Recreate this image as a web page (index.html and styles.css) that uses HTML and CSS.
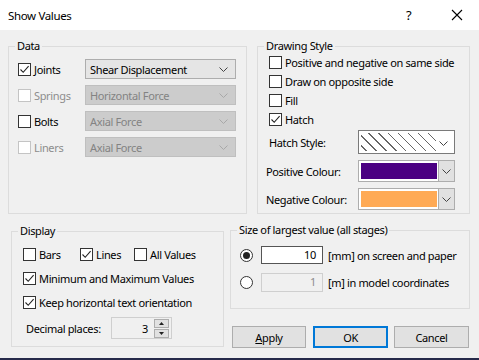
FILE: index.html
```html
<!DOCTYPE html>
<html>
<head>
<meta charset="utf-8">
<link rel="stylesheet" href="styles.css">
</head>
<body>
<div class="window">
  <div class="titlebar">
    <span class="title">Show Values</span>
    <span class="help">?</span>
    <span class="close"><svg width="12" height="12" viewBox="0 0 12 12"><path d="M1 1 L11 11 M11 1 L1 11" stroke="#000" stroke-width="1.1" fill="none"/></svg></span>
  </div>
  <div class="content">
    <div class="toprow">
      <div class="group data">
        <span class="legend">Data</span>
        <div class="drow">
          <span class="chk"><span class="box"><svg width="11" height="11" viewBox="0 0 11 11"><path d="M1.5 5.5 L4.2 8.3 L9.6 2.2" stroke="#222" stroke-width="1.1" fill="none"/></svg></span>Joints</span>
          <span class="combo">Shear Displacement<svg class="arr" width="9" height="5" viewBox="0 0 9 5"><path d="M0.5 0.5 L4.5 4.5 L8.5 0.5" stroke="#444" fill="none"/></svg></span>
        </div>
        <div class="drow">
          <span class="chk dis"><span class="box"></span>Springs</span>
          <span class="combo dis">Horizontal Force<svg class="arr" width="9" height="5" viewBox="0 0 9 5"><path d="M0.5 0.5 L4.5 4.5 L8.5 0.5" stroke="#a8a8a8" fill="none"/></svg></span>
        </div>
        <div class="drow">
          <span class="chk"><span class="box"></span>Bolts</span>
          <span class="combo dis">Axial Force<svg class="arr" width="9" height="5" viewBox="0 0 9 5"><path d="M0.5 0.5 L4.5 4.5 L8.5 0.5" stroke="#a8a8a8" fill="none"/></svg></span>
        </div>
        <div class="drow">
          <span class="chk dis"><span class="box"></span>Liners</span>
          <span class="combo dis">Axial Force<svg class="arr" width="9" height="5" viewBox="0 0 9 5"><path d="M0.5 0.5 L4.5 4.5 L8.5 0.5" stroke="#a8a8a8" fill="none"/></svg></span>
        </div>
      </div>
      <div class="group drawing">
        <span class="legend">Drawing Style</span>
        <div class="srow"><span class="chk"><span class="box"></span>Positive and negative on same side</span></div>
        <div class="srow"><span class="chk"><span class="box"></span>Draw on opposite side</span></div>
        <div class="srow"><span class="chk"><span class="box"></span>Fill</span></div>
        <div class="srow"><span class="chk"><span class="box"><svg width="11" height="11" viewBox="0 0 11 11"><path d="M1.5 5.5 L4.2 8.3 L9.6 2.2" stroke="#222" stroke-width="1.1" fill="none"/></svg></span>Hatch</span></div>
        <div class="frow hatchrow">
          <span class="flabel">Hatch Style:</span>
          <span class="hatchbox"><span class="hatch"></span><svg class="arr" width="9" height="5" viewBox="0 0 9 5"><path d="M0.5 0.5 L4.5 4.5 L8.5 0.5" stroke="#444" fill="none"/></svg></span>
        </div>
        <div class="frow">
          <span class="flabel">Positive Colour:</span>
          <span class="colbox"><span class="swatch pos"></span><span class="dbtn"><svg width="9" height="5" viewBox="0 0 9 5"><path d="M0.5 0.5 L4.5 4.5 L8.5 0.5" stroke="#444" fill="none"/></svg></span></span>
        </div>
        <div class="frow">
          <span class="flabel">Negative Colour:</span>
          <span class="colbox"><span class="swatch neg"></span><span class="dbtn"><svg width="9" height="5" viewBox="0 0 9 5"><path d="M0.5 0.5 L4.5 4.5 L8.5 0.5" stroke="#444" fill="none"/></svg></span></span>
        </div>
      </div>
    </div>
    <div class="bottomrow">
      <div class="group display">
        <span class="legend">Display</span>
        <div class="prow first">
          <span class="chk w57"><span class="box"></span>Bars</span>
          <span class="chk w54"><span class="box"><svg width="11" height="11" viewBox="0 0 11 11"><path d="M1.5 5.5 L4.2 8.3 L9.6 2.2" stroke="#222" stroke-width="1.1" fill="none"/></svg></span>Lines</span>
          <span class="chk"><span class="box"></span>All Values</span>
        </div>
        <div class="prow">
          <span class="chk"><span class="box"><svg width="11" height="11" viewBox="0 0 11 11"><path d="M1.5 5.5 L4.2 8.3 L9.6 2.2" stroke="#222" stroke-width="1.1" fill="none"/></svg></span>Minimum and Maximum Values</span>
        </div>
        <div class="prow">
          <span class="chk"><span class="box"><svg width="11" height="11" viewBox="0 0 11 11"><path d="M1.5 5.5 L4.2 8.3 L9.6 2.2" stroke="#222" stroke-width="1.1" fill="none"/></svg></span>Keep horizontal text orientation</span>
        </div>
        <div class="decrow">
          <span class="declabel">Decimal places:</span>
          <span class="spin"><span class="spinval">3</span><span class="spinbtns"><span class="sb"><svg width="5" height="3" viewBox="0 0 5 3"><path d="M0 3 L2.5 0 L5 3 Z" fill="#222"/></svg></span><span class="sb"><svg width="5" height="3" viewBox="0 0 5 3"><path d="M0 0 L2.5 3 L5 0 Z" fill="#222"/></svg></span></span></span>
        </div>
      </div>
      <div class="rightcol">
        <div class="group size">
          <span class="legend">Size of largest value (all stages)</span>
          <div class="rrow">
            <span class="radio on"><span class="dot"></span></span>
            <span class="num">10</span>
            <span class="rtext">[mm] on screen and paper</span>
          </div>
          <div class="rrow second">
            <span class="radio"></span>
            <span class="num dis">1</span>
            <span class="rtext">[m] in model coordinates</span>
          </div>
        </div>
        <div class="buttons">
          <span class="btn"><u>A</u>pply</span>
          <span class="btn ok">OK</span>
          <span class="btn">Cancel</span>
        </div>
      </div>
    </div>
  </div>
  <div class="strip"></div>
</div>
</body>
</html>
```

FILE: styles.css
```css
* { box-sizing: border-box; }
html, body { margin: 0; padding: 0; }
body {
  width: 479px;
  height: 360px;
  overflow: hidden;
  font-family: "Noto Sans", "Open Sans", sans-serif;
  font-size: 11px;
  letter-spacing: -0.35px;
  color: #000;
  background: #f0f0f0;
  white-space: nowrap;
}
.window { width: 479px; height: 360px; display: flex; flex-direction: column; }
.titlebar {
  height: 30px;
  background: #fff;
  display: flex;
  align-items: center;
  padding-left: 8px;
  flex: none;
}
.title { flex: 1; font-size: 11.5px; }
.help { width: 12px; margin-right: 33px; font-size: 13px; letter-spacing: 0; }
.close { width: 12px; margin-right: 16px; display: flex; }
.content {
  flex: none;
  height: 328px;
  background: #f0f0f0;
  padding: 16px 0 0 8px;
}
.strip { flex: none; height: 2px; background: #262a4a; }

.group {
  position: relative;
  border: 1px solid #dcdcdc;
}
.legend {
  position: absolute;
  top: -9px;
  left: 6px;
  padding: 0 2px;
  background: #f0f0f0;
  line-height: 16px;
}
.toprow { display: flex; gap: 10px; }
.data { width: 239px; height: 168px; padding: 12px 0 0 9px; }
.drawing { width: 213px; height: 168px; padding: 6px 0 0 0; }

.chk { display: inline-flex; align-items: center; white-space: nowrap; }
.box {
  width: 13px; height: 13px;
  border: 1px solid #333;
  background: #fff;
  margin-right: 3px;
  display: inline-flex; align-items: center; justify-content: center;
  flex: none;
}
.chk.dis { color: #8d8d8d; }
.chk.dis .box { border-color: #c4c4c4; }

.drow { display: flex; align-items: center; height: 20px; margin-bottom: 6px; }
.drow .chk { width: 67px; }
.combo {
  width: 151px; height: 20px;
  border: 1px solid #adadad;
  background: #e5e5e5;
  display: flex; align-items: center;
  padding-left: 4px;
  position: relative;
}
.combo .arr { position: absolute; right: 7px; top: 7px; }
.combo.dis { background: #cccccc; border-color: #bfbfbf; color: #838383; }

.srow { height: 19px; display: flex; align-items: center; padding-left: 11px; }
.frow { display: flex; align-items: center; padding-left: 8px; margin-top: 6px; }
.hatchrow { margin-top: 1px; }
.flabel { width: 92px; }
.hatchrow .flabel { padding-left: 3px; }
.hatchbox {
  width: 97px; height: 24px;
  border: 1px solid #7a7a7a;
  background: #fff;
  display: flex; align-items: center;
  padding: 2px;
  position: relative;
}
.hatch {
  width: 75px; height: 18px;
  background: repeating-linear-gradient(45deg, #fff 0 3.5px, #666 3.5px 4.5px, #fff 4.5px 7px);
}
.hatchbox .arr { position: absolute; right: 6px; top: 10px; }
.colbox {
  width: 97px; height: 22px;
  border: 1px solid #adadad;
  background: #fff;
  display: flex;
  padding: 2px 0 2px 2px;
}
.swatch { width: 76px; height: 100%; }
.swatch.pos { background: #4b0082; }
.swatch.neg { background: #ffaa55; }
.dbtn {
  flex: 1;
  margin: -2px 0 -2px 1px;
  border-left: 1px solid #adadad;
  background: #e1e1e1;
  display: flex; align-items: center; justify-content: center;
}

.bottomrow { display: flex; align-items: flex-start; margin-top: 17px; }
.display { width: 213px; height: 116px; margin-left: 3px; padding: 13px 0 0 11px; }
.rightcol { margin-left: 6px; margin-top: -1px; }
.size { width: 240px; height: 79px; padding: 15px 0 0 9px; }

.prow { display: flex; align-items: center; height: 19px; margin-bottom: 5px; }
.w57 { width: 57px; }
.w54 { width: 54px; }
.decrow { display: flex; align-items: center; padding-left: 3px; margin-top: 0px; }
.declabel { width: 85px; }
.spin {
  width: 61px; height: 22px;
  border: 1px solid #cfcfcf;
  background: #f0f0f0;
  display: flex; align-items: center;
}
.spinval { flex: 1; text-align: right; padding-right: 6px; }
.spinbtns { width: 15px; display: flex; flex-direction: column; gap: 1px; margin-right: 2px; }
.sb {
  height: 9px;
  border: 1px solid #adadad;
  background: #e1e1e1;
  display: flex; align-items: center; justify-content: center;
}

.rrow { display: flex; align-items: center; height: 18px; }
.rrow.second { margin-top: 9px; height: 19px; }
.radio {
  width: 13px; height: 13px; border-radius: 50%;
  border: 1px solid #333; background: #fff;
  display: flex; align-items: center; justify-content: center;
  margin-right: 8px; flex: none;
}
.dot { width: 7px; height: 7px; border-radius: 50%; background: #222; }
.num {
  width: 62px; height: 18px;
  border: 1px solid #555;
  background: #fff;
  text-align: right; padding-right: 6px;
  line-height: 16px;
  flex: none;
}
.num.dis { border-color: #cfcfcf; background: #f0f0f0; color: #8d8d8d; height: 19px; }
.rtext { margin-left: 5px; }

.buttons { display: flex; margin-top: 17px; margin-left: 2px; gap: 7px; }
.btn {
  width: 74px; height: 22px;
  border: 1px solid #adadad;
  background: #e1e1e1;
  display: flex; align-items: center; justify-content: center;
}
.btn.ok { border: 2px solid #0078d7; width: 75px; }
.btn + .btn + .btn { margin-left: -1px; width: 75px; }
```
